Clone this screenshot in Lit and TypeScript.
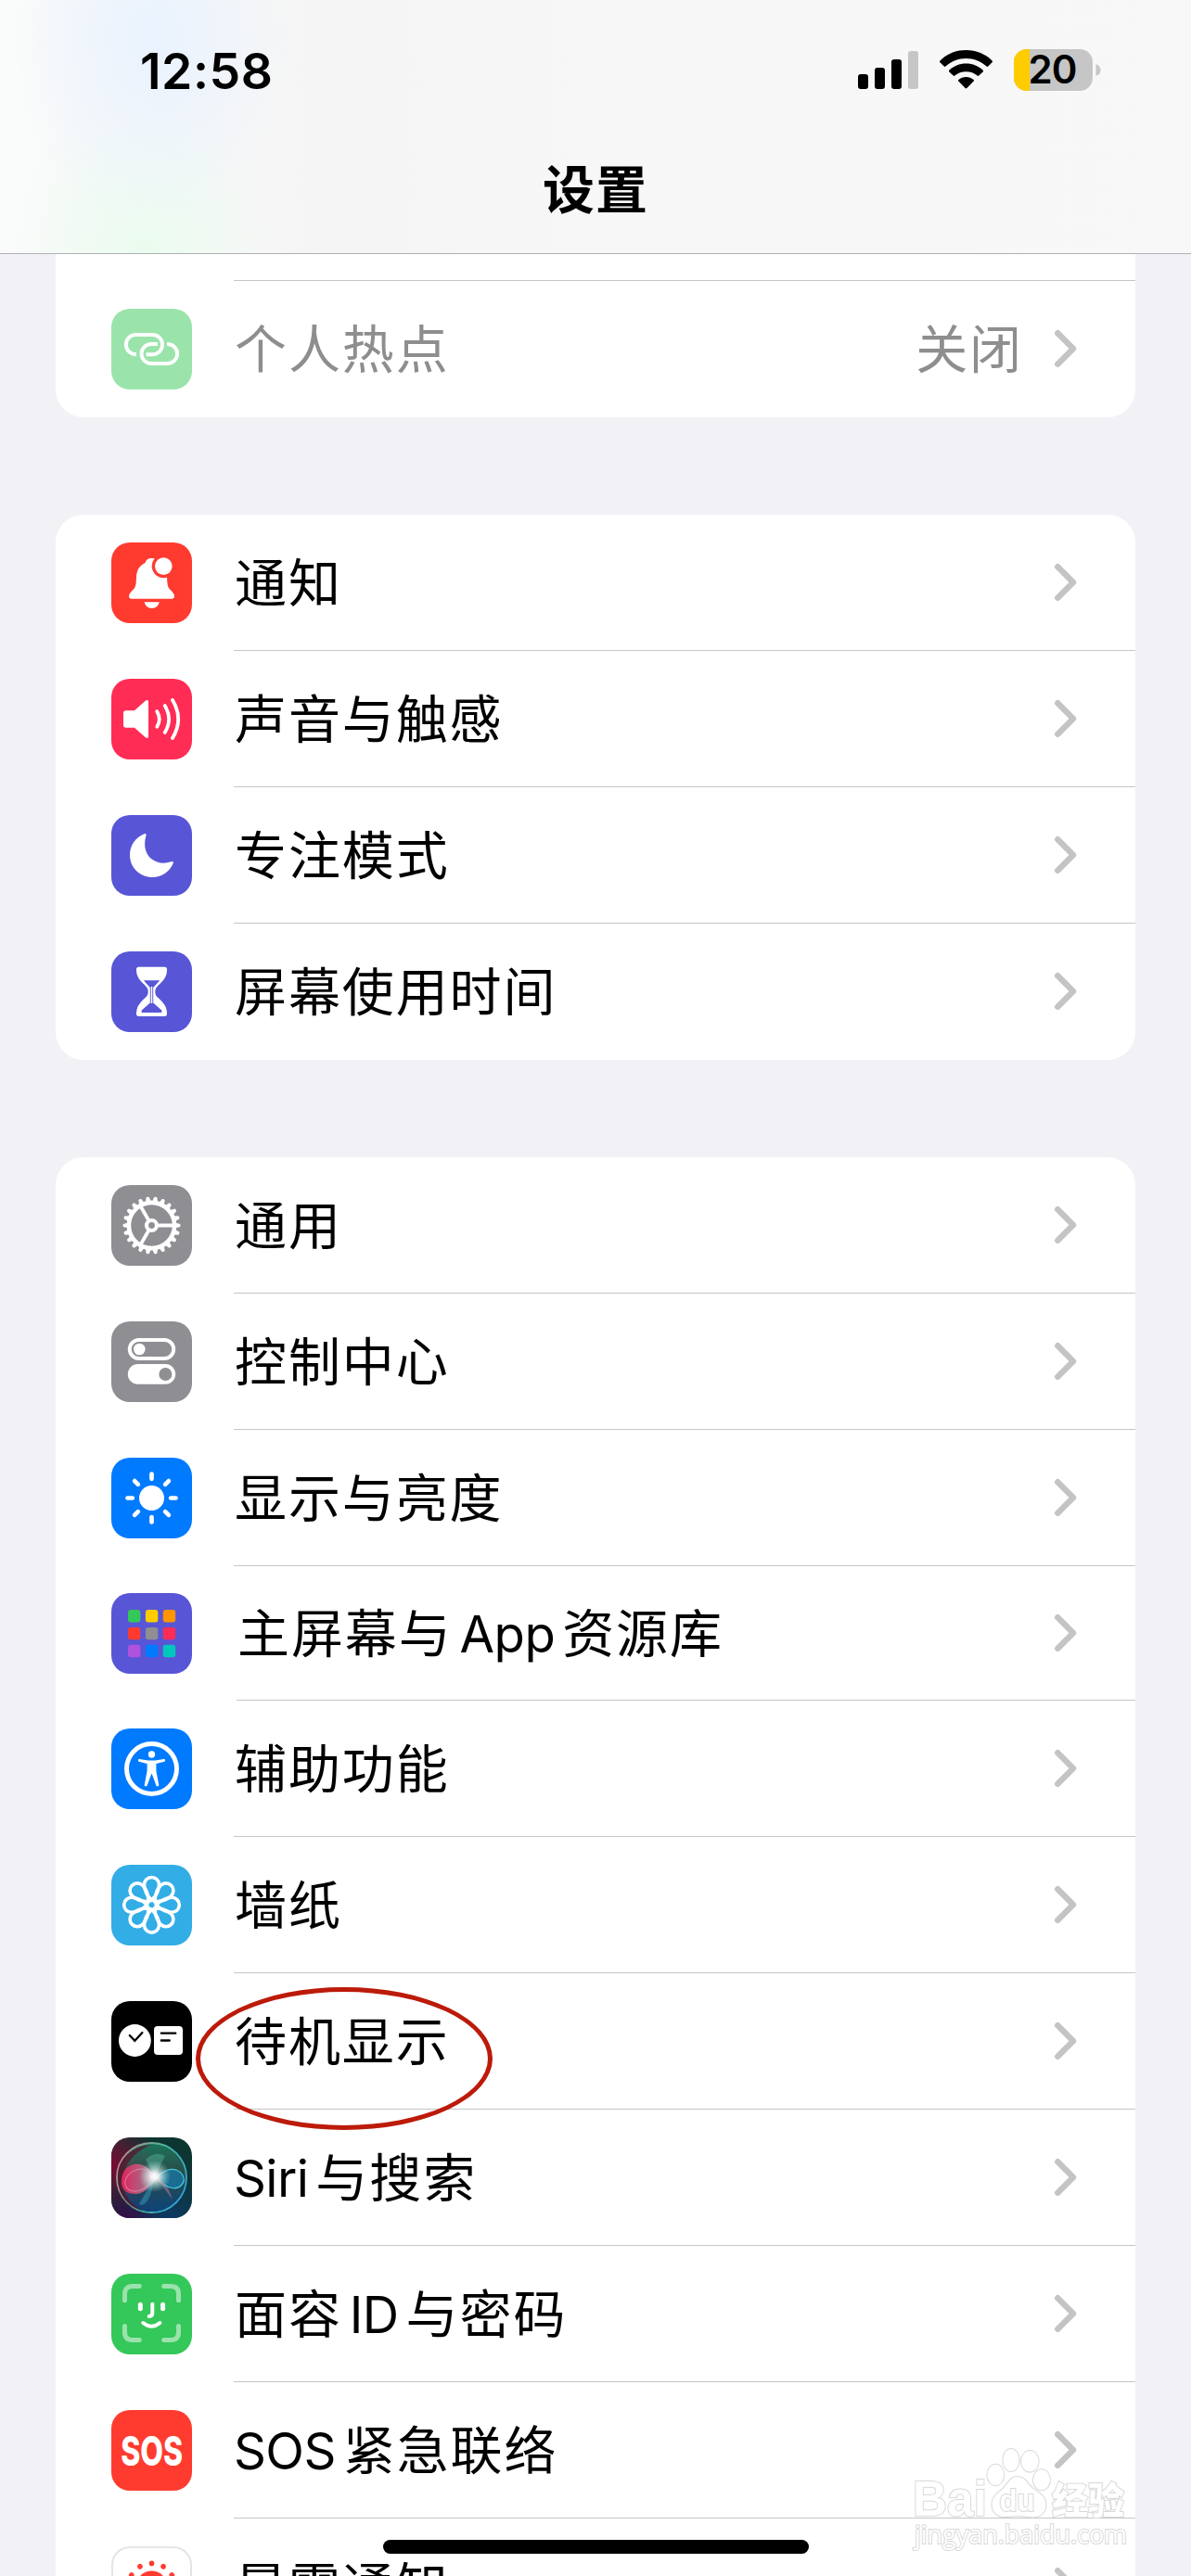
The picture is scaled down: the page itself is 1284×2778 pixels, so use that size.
import { LitElement, html, css, svg } from 'lit';
import { customElement, property } from 'lit/decorators.js';
import { classMap } from 'lit/directives/class-map.js';

interface SettingsItem {
  icon: string;
  label: string;
  value?: string;
  disabled?: boolean;
  compact?: boolean;
}

const connectivity: SettingsItem[] = [
  { icon: 'hotspot', label: '个人热点', value: '关闭', disabled: true },
];

const alerts: SettingsItem[] = [
  { icon: 'bell', label: '通知' },
  { icon: 'sound', label: '声音与触感' },
  { icon: 'moon', label: '专注模式' },
  { icon: 'hourglass', label: '屏幕使用时间' },
];

const system: SettingsItem[] = [
  { icon: 'gear', label: '通用' },
  { icon: 'toggles', label: '控制中心' },
  { icon: 'sun', label: '显示与亮度' },
  { icon: 'grid', label: '主屏幕与App资源库', compact: true },
  { icon: 'person', label: '辅助功能' },
  { icon: 'flower', label: '墙纸' },
  { icon: 'standby', label: '待机显示' },
  { icon: 'siri', label: 'Siri与搜索' },
  { icon: 'faceid', label: '面容ID与密码' },
  { icon: 'sos', label: 'SOS紧急联络' },
  { icon: 'exposure', label: '暴露通知' },
];

const range = (n: number) => Array.from({ length: n }, (_, i) => i);

const gridColors = [
  '#34c759', '#ffcc00', '#ff9500',
  '#ff3b30', '#8e8e93', '#ff2d55',
  '#af52de', '#007aff', '#00c7be',
];

const glyphs: Record<string, unknown> = {
  hotspot: svg`
    <g fill="none" stroke="#fff" stroke-width="3.9">
      <path d="M27 49.3C20.5 49.3 15.8 44.6 15.8 38.6S20.5 28 26.5 28H44.5a10.6 10.6 0 0 1 0 21.2H37.5" />
      <path d="M50 38H43a10.5 10.5 0 0 0 0 21H60.6a10.5 10.5 0 0 0 0-21H60" />
    </g>`,
  bell: svg`
    <path fill="#fff" d="M43.5 17c-4 0-6 1.8-7 5C30 25 27.5 30 27 37C26.8 44 26.5 48 24 50.5C21 53.5 19 55.5 19 58c0 1.8 1 2.8 3 2.8H65c2 0 3-1 3-2.8c0-2.5-2-4.5-5-7.5C60.6 48 60.3 44 60 37C59.5 30 57 25 50.5 22C49.5 18.8 47.5 17 43.5 17z" />
    <path fill="#fff" d="M35.7 64.3H51.7C51 68.5 47.5 71 43.7 71S36.4 68.5 35.7 64.3z" />
    <circle cx="56.3" cy="25.6" r="12.6" fill="#ff3b30" />
    <circle cx="56.3" cy="25.6" r="9.3" fill="#fff" />`,
  sound: svg`
    <path fill="#fff" d="M13 37q0-2.8 2.8-2.8H25L36.5 24Q40 21.5 40 25V62Q40 65.5 36.5 63L25 52.7H15.8Q13 52.7 13 50z" />
    <g fill="none" stroke="#fff" stroke-width="3.8" stroke-linecap="round">
      <path d="M49.3 35.2Q54.2 43.5 49.3 51.8" />
      <path d="M57.7 29Q66.5 43.5 57.7 58" />
      <path d="M66 23Q78.4 43.5 66 64" />
    </g>`,
  moon: svg`
    <path fill="#fff" d="M35.5 20.3Q38 19.3 37.5 22C34.3 33 37 42 43 47C49 52 57 52.8 64.5 50.3Q67.5 49.5 66.7 52C63 61 54 67 44.5 67C31 67 20 57 20 43C20 33 26 24 35.5 20.3z" />`,
  hourglass: svg`
    <path fill="#fff" d="M29.5 16.8H57.5Q60 16.8 60 19.5C60 27 57 30.5 51 36.3C48.5 39 47.3 40 47.3 43.4S48.5 48 51 50.5C57 56.3 60 60 60 67.3Q60 70 57.5 70H29.5Q27 70 27 67.3C27 60 30 56.3 36 50.5C38.5 48 39.7 46.8 39.7 43.4S38.5 39 36 36.3C30 30.5 27 27 27 19.5Q27 16.8 29.5 16.8z" />
    <path fill="#5856d6" d="M34.8 31.2H52.4L45.2 39V55.4L54.3 63.6V66H32.7V63.6L41.8 55.4V39z" />
    <path stroke="#fff" stroke-width="1.5" d="M43.5 38V56" />`,
  gear: svg`
    <g transform="translate(43.5 43.5)" fill="none" stroke="#fff">
      <circle r="24.6" stroke-width="4.6" />
      <circle r="5.5" stroke-width="4.2" />
      ${[0, 120, 240].map(a => svg`<path stroke-width="3.8" d="M7 0H24" transform="rotate(${a})" />`)}
      ${range(22).map(i => svg`<path fill="#fff" stroke="none" transform="rotate(${(i * 360) / 22})" d="M26-2.8L30.6-1.6Q31.6 0 30.6 1.6L26 2.8z" />`)}
    </g>`,
  toggles: svg`
    <rect x="19.8" y="20" width="47.4" height="20" rx="10" fill="none" stroke="#fff" stroke-width="4" />
    <circle cx="30.3" cy="30" r="6.3" fill="#fff" />
    <rect x="17.8" y="46" width="51.4" height="21.8" rx="10.9" fill="#fff" />
    <circle cx="58.4" cy="57" r="7" fill="#8e8e93" />`,
  sun: svg`
    <g transform="translate(43.5 43.5)">
      <circle r="13.5" fill="#fff" />
      ${range(8).map(i => svg`<path stroke="#fff" stroke-width="4.7" stroke-linecap="round" d="M20.7 0H26" transform="rotate(${i * 45})" />`)}
    </g>`,
  grid: svg`
    ${gridColors.map((c, i) => svg`
      <rect x=${18 + (i % 3) * 18.9} y=${18 + Math.floor(i / 3) * 18.9} width="13.4" height="13.4" rx="3" fill=${c} />
    `)}`,
  person: svg`
    <circle cx="43.5" cy="43.5" r="27" fill="none" stroke="#fff" stroke-width="5" />
    <circle cx="43.5" cy="28" r="3.7" fill="#fff" />
    <path fill="#fff" stroke="#fff" stroke-width="2" stroke-linejoin="round" d="M30 34L39.5 35.6H47.5L57 34V34.8L47.4 37.2V46L50.3 61.2H49.3L44.4 48H42.6L37.7 61.2H36.7L39.6 46V37.2L30 34.8z" />`,
  flower: svg`
    <g transform="translate(43.5 43.3)" fill="none" stroke="#fff" stroke-width="3.6">
      ${range(8).map(i => svg`<path transform="rotate(${i * 45})" d="M0-5C-4-9-8-15-8-21.8A8 8 0 0 1 8-21.8C8-15 4-9 0-5z" />`)}
      <circle r="5.2" />
    </g>`,
  standby: svg`
    <circle cx="25.4" cy="42.5" r="17.4" fill="#fff" />
    <rect x="46" y="27" width="31" height="31" rx="4" fill="#fff" />
    <g fill="none" stroke="#000" stroke-width="2.3" stroke-linecap="round">
      <path d="M19.8 37L25.3 42.8L33.4 34" />
      <path d="M53.8 34.7H69.3M53.8 42.5H62.8" />
    </g>`,
  siri: svg`
    <defs>
      <radialGradient id="s-pink" gradientUnits="userSpaceOnUse" cx="0" cy="30" r="50">
        <stop offset="0" stop-color="#7d0a33" />
        <stop offset="1" stop-color="#7d0a33" stop-opacity="0" />
      </radialGradient>
      <radialGradient id="s-navy" gradientUnits="userSpaceOnUse" cx="60" cy="95" r="60">
        <stop offset="0" stop-color="#0b3a6b" />
        <stop offset="1" stop-color="#0b3a6b" stop-opacity="0" />
      </radialGradient>
      <radialGradient id="s-violet" gradientUnits="userSpaceOnUse" cx="14" cy="90" r="42">
        <stop offset="0" stop-color="#3a0a4a" />
        <stop offset="1" stop-color="#3a0a4a" stop-opacity="0" />
      </radialGradient>
      <linearGradient id="s-ball" x1="0" y1="0" x2="0" y2="1">
        <stop offset="0" stop-color="#1f8a68" />
        <stop offset=".45" stop-color="#35504f" />
        <stop offset="1" stop-color="#0b4a86" />
      </linearGradient>
      <linearGradient id="s-rim" x1="0" y1=".3" x2="1" y2=".7">
        <stop offset="0" stop-color="#c58a94" />
        <stop offset=".5" stop-color="#49b596" />
        <stop offset="1" stop-color="#2fa4e0" />
      </linearGradient>
      <linearGradient id="s-left" x1="0" y1="0" x2="1" y2="0">
        <stop offset="0" stop-color="#e0245c" />
        <stop offset=".5" stop-color="#c45a80" stop-opacity=".9" />
        <stop offset="1" stop-color="#c9b5bc" stop-opacity=".7" />
      </linearGradient>
      <radialGradient id="s-glow">
        <stop offset="0" stop-color="#fff" />
        <stop offset=".25" stop-color="#fff" stop-opacity=".85" />
        <stop offset="1" stop-color="#9fe8e0" stop-opacity="0" />
      </radialGradient>
    </defs>
    <rect width="87" height="87" fill="#0d3531" />
    <rect width="87" height="87" fill="url(#s-navy)" />
    <rect width="87" height="87" fill="url(#s-pink)" />
    <rect width="87" height="87" fill="url(#s-violet)" />
    <circle cx="43.5" cy="43.5" r="37.5" fill="url(#s-ball)" fill-opacity=".75" stroke="url(#s-rim)" stroke-width="1.8" />
    <path d="M7 43C6 22 25 9 43 8C28 14 14 26 12 46C12 62 22 73 34 79C18 76 7 62 7 43z" fill="#5a0a26" opacity=".65" />
    <path d="M11 50C10 33 22 27 31 29C39 31 45 38 50 43C44 50 38 60 27 61C18 61 12 58 11 50z" fill="url(#s-left)" />
    <path d="M49 42C57 36 63 33 70 35C77 38 81 45 76 51C71 57 62 55 57 51z" fill="#1580b4" opacity=".65" />
    <path d="M49 42C57 36 63 33 70 35C77 38 81 45 76 51C71 57 62 55 57 51" fill="none" stroke="#45cbe0" stroke-width="1.2" />
    <ellipse cx="29" cy="46" rx="15" ry="11" transform="rotate(-28 29 46)" fill="none" stroke="#e8a3bd" stroke-width=".9" opacity=".7" />
    <path d="M47 42L30 72Q41 77 47 42" fill="#46c5e0" opacity=".35" />
    <path d="M48 43L66 67Q60 48 48 43" fill="#d58aa8" opacity=".45" />
    <path d="M37 24L47 42L58 20Q47 14 37 24" fill="#6fe0bc" opacity=".3" />
    <circle cx="47" cy="42" r="17" fill="url(#s-glow)" />`,
  faceid: svg`
    <g fill="none" stroke-linecap="round">
      <path stroke="#9ae3ac" stroke-width="5" d="M14.5 28.7V22Q14.5 13.6 23 13.6H30.3M56.7 13.6H64Q72.5 13.6 72.5 22V28.7M72.5 56.5V63Q72.5 71.5 64 71.5H56.7M30.3 71.5H23Q14.5 71.5 14.5 63V56.5" />
      <path stroke="#fff" stroke-width="5" d="M31.3 33.3V37.7M55.6 33.3V37.7" />
      <path stroke="#fff" stroke-width="4" d="M44.3 32.8V42.5Q44.3 45.8 40.6 46M34.3 53Q43.4 60.5 52.4 53" />
    </g>`,
  sos: svg`
    <text x="10.2" y="59.5" textLength="67" lengthAdjust="spacingAndGlyphs" class="sos-text">SOS</text>`,
  exposure: svg`
    <circle cx="43.5" cy="43.5" r="17" fill="#ff3b30" />
    ${range(12).map(i => svg`<circle cx="43.5" cy="18.4" r="2.8" fill="#ff3b30" transform="rotate(${i * 30} 43.5 43.5)" />`)}`,
};

@customElement('settings-icon')
export class SettingsIcon extends LitElement {
  @property() name = '';

  static styles = css`
    :host {
      display: block;
      flex: none;
    }

    .tile {
      display: block;
      box-sizing: border-box;
      width: 87px;
      height: 87px;
      border-radius: 20px;
      overflow: hidden;
    }

    .hotspot { background: #9ae4ab; }
    .bell, .sos { background: #ff3b30; }
    .sound { background: #ff2d55; }
    .moon, .hourglass, .grid { background: #5856d6; }
    .gear, .toggles { background: #8e8e93; }
    .sun, .person { background: #007aff; }
    .flower { background: #32ade6; }
    .standby { background: #000; }
    .faceid { background: #34c759; }
    .exposure {
      background: #fff;
      box-shadow: inset 0 0 0 2px #e5e5e5;
    }

    .sos-text {
      font: 800 44px Inter, 'Liberation Sans', sans-serif;
      fill: #fff;
    }
  `;

  render() {
    return html`
      <svg class="tile ${this.name}" viewBox="0 0 87 87">${glyphs[this.name]}</svg>
    `;
  }
}

@customElement('settings-row')
export class SettingsRow extends LitElement {
  @property({ attribute: false }) item!: SettingsItem;
  @property({ type: Boolean }) last = false;

  static styles = css`
    :host {
      display: block;
    }

    .row {
      display: flex;
      align-items: center;
      gap: 45px;
      height: 147px;
      padding-left: 60px;
    }

    .row.compact {
      height: 145px;
      gap: 48px;
    }

    .body {
      display: flex;
      align-items: center;
      align-self: stretch;
      flex: 1;
      box-sizing: border-box;
      padding: 0 62px 0 1px;
      border-bottom: 1px solid #c6c6c8;
    }

    .row.last .body {
      border-bottom-color: transparent;
    }

    .label {
      display: flex;
      align-items: baseline;
      flex: 1;
      padding-bottom: 7px;
      font-size: 56px;
      line-height: 80px;
      letter-spacing: 1.9px;
      white-space: nowrap;
    }

    .latin {
      font-family: Inter, 'Liberation Sans', sans-serif;
      font-size: 54.5px;
      line-height: 60px;
      letter-spacing: -0.6px;
      margin: 0 8px;
    }

    .latin:first-child {
      margin-left: -1px;
    }

    .value {
      font-size: 56px;
      line-height: 80px;
      letter-spacing: 1.9px;
      padding-bottom: 7px;
      margin-right: 32px;
    }

    .disabled .label,
    .disabled .value {
      color: #8e8e8f;
    }

    .chevron {
      flex: none;
      width: 27px;
      height: 42px;
    }
  `;

  renderLabel() {
    return this.item.label
      .split(/([A-Za-z]+)/)
      .filter(part => part)
      .map(part => html`<span class=${/[A-Za-z]/.test(part) ? 'latin' : 'han'}>${part}</span>`);
  }

  render() {
    const { icon, value, disabled, compact } = this.item;
    return html`
      <div class=${classMap({ row: true, last: this.last, disabled: !!disabled, compact: !!compact })}>
        <settings-icon .name=${icon}></settings-icon>
        <div class="body">
          <div class="label">${this.renderLabel()}</div>
          ${value ? html`<div class="value">${value}</div>` : ''}
          <svg class="chevron" viewBox="0 0 27 42">
            <path d="M5.3 4.2L22 21L5.3 37.8" fill="none" stroke="#c4c4c6" stroke-width="6.5" stroke-linecap="round" stroke-linejoin="round" />
          </svg>
        </div>
      </div>
    `;
  }
}

@customElement('status-bar')
export class StatusBar extends LitElement {
  static styles = css`
    :host {
      display: flex;
      align-items: center;
      justify-content: space-between;
      box-sizing: border-box;
      height: 152px;
      padding: 0 97px 0 151px;
      font-family: Inter, 'Liberation Sans', sans-serif;
    }

    .time {
      font-size: 53.5px;
      font-weight: 600;
      letter-spacing: 0.5px;
      line-height: 60px;
      padding-top: 2px;
    }

    .icons {
      display: flex;
      align-items: center;
      gap: 23px;
    }

    .icons svg {
      display: block;
      height: 46px;
    }

    .percent {
      font: 600 42px Inter, 'Liberation Sans', sans-serif;
    }
  `;

  render() {
    return html`
      <span class="time">12:58</span>
      <div class="icons">
        <svg width="65" viewBox="0 0 65 46">
          <rect y="27" width="11" height="16" rx="3" />
          <rect x="18" y="20" width="11" height="23" rx="3" />
          <rect x="36" y="11" width="11" height="32" rx="3" />
          <rect x="54" y="2" width="11" height="41" rx="3" fill="#c6c6c6" />
        </svg>
        <svg width="57" viewBox="0 0 57 46">
          <path d="M28.5 1C39.5 1 49.5 5.2 56.6 12.4Q57.4 13.3 56.6 14.2L52.3 18.6Q51.5 19.4 50.6 18.6C44.6 13 37 9.9 28.5 9.9S12.4 13 6.4 18.6Q5.5 19.4 4.7 18.6L.4 14.2Q-.4 13.3 .4 12.4C7.5 5.2 17.5 1 28.5 1z" />
          <path d="M28.5 15.5C35.5 15.5 42 18.2 46.7 22.7Q47.5 23.5 46.7 24.4L42.3 28.6Q41.5 29.4 40.6 28.6C37.3 25.8 33.1 24.3 28.5 24.3S19.7 25.8 16.4 28.6Q15.5 29.4 14.7 28.6L10.3 24.4Q9.5 23.5 10.3 22.7C15 18.2 21.5 15.5 28.5 15.5z" />
          <path d="M28.5 30C31.5 30 34.3 31.1 36.6 32.9Q37.5 33.7 36.7 34.6L29.4 42Q28.5 42.9 27.6 42L20.3 34.6Q19.5 33.7 20.4 32.9C22.7 31.1 25.5 30 28.5 30z" />
        </svg>
        <svg width="94" viewBox="0 0 94 46">
          <clipPath id="cell"><rect width="85" height="45" rx="14" /></clipPath>
          <rect width="85" height="45" fill="#c6c6c6" clip-path="url(#cell)" />
          <rect width="17" height="45" fill="#ffcc00" clip-path="url(#cell)" />
          <path d="M88.5 16Q93.5 18 93.5 22.5T88.5 29z" fill="#c6c6c6" />
          <text x="15.5" y="37.4" textLength="53" class="percent">20</text>
        </svg>
      </div>
    `;
  }
}

@customElement('app-root')
export class AppRoot extends LitElement {
  static styles = css`
    :host {
      display: block;
      position: relative;
      width: 1284px;
      height: 2778px;
      overflow: hidden;
      background: #f2f1f6;
      color: #000;
      font-family: 'Noto Sans CJK SC', 'Noto Sans', sans-serif;
    }

    .header {
      box-sizing: border-box;
      height: 274px;
      border-bottom: 1px solid #b0b0b3;
      background:
        radial-gradient(ellipse 150px 210px at 165px 40px, #e9f2fe, #e9f2fe00),
        radial-gradient(ellipse 140px 160px at 155px 265px, #ebfcef, #ebfcef00),
        linear-gradient(90deg, #fafbfb, #f5f5f5 28%, #f7f7f7 50%, #f8f8f8);
    }

    .title {
      margin: 0;
      font-size: 56px;
      font-weight: 700;
      line-height: 80px;
      letter-spacing: 1px;
      text-align: center;
      padding-top: 9px;
    }

    .content {
      display: flex;
      flex-direction: column;
      gap: 105px;
      padding: 0 60px;
    }

    .card {
      background: #fff;
      border-radius: 30px;
    }

    .card.scrolled {
      border-top-left-radius: 0;
      border-top-right-radius: 0;
    }

    .sliver {
      height: 28px;
      margin-left: 192px;
      border-bottom: 1px solid #c6c6c8;
    }

    .marker {
      position: absolute;
      box-sizing: border-box;
      left: 211px;
      top: 2143px;
      width: 320px;
      height: 154px;
      border: 5px solid #bc1a0a;
      border-radius: 50%;
    }

    .home-indicator {
      position: absolute;
      left: 413px;
      top: 2739px;
      width: 459px;
      height: 15px;
      border-radius: 8px;
      background: #000;
    }

    .watermark {
      position: absolute;
      left: 980px;
      top: 2636px;
      width: 240px;
      height: 120px;
      fill: #fff;
      stroke: #d8d8d8;
      stroke-width: 2px;
      paint-order: stroke;
    }

    .brand {
      font: 700 54px 'Liberation Sans', sans-serif;
    }

    .brand-small {
      font: 700 33px 'Liberation Sans', sans-serif;
    }

    .brand-han {
      font: 900 40px 'Noto Sans CJK SC', sans-serif;
    }

    .site {
      font: 400 27.5px 'Open Sans', sans-serif;
    }
  `;

  renderRows(items: SettingsItem[]) {
    return items.map((item, i) => html`
      <settings-row .item=${item} ?last=${i === items.length - 1}></settings-row>
    `);
  }

  render() {
    return html`
      <header class="header">
        <status-bar></status-bar>
        <h1 class="title">设置</h1>
      </header>
      <main class="content">
        <section class="card scrolled">
          <div class="sliver"></div>
          ${this.renderRows(connectivity)}
        </section>
        <section class="card">${this.renderRows(alerts)}</section>
        <section class="card">${this.renderRows(system)}</section>
      </main>
      <div class="marker"></div>
      <div class="home-indicator"></div>
      <svg class="watermark" viewBox="0 0 240 120">
        <text class="brand" x="4" y="77" textLength="80" lengthAdjust="spacingAndGlyphs">Bai</text>
        <ellipse cx="93.3" cy="33" rx="9" ry="11.3" />
        <ellipse cx="110" cy="17" rx="8.7" ry="12" />
        <ellipse cx="130.3" cy="18.3" rx="9.3" ry="11.3" />
        <ellipse cx="143" cy="38.3" rx="9" ry="11" />
        <path d="M117 35C126 35 128 44 134 48C141 53 147.5 56 147.5 65C147.5 74 141 78.5 134 78.5C128 78.5 124 77 118 77C112 77 109 78 103 78C95 78 89.5 73 89.5 64.5C89.5 56 96 53 102 47C107 42 109 35 117 35z" />
        <text class="brand-small" x="97.5" y="71.5" textLength="38" lengthAdjust="spacingAndGlyphs">du</text>
        <text class="brand-han" x="154" y="75" textLength="78" lengthAdjust="spacingAndGlyphs">经验</text>
        <text class="site" x="6" y="107" textLength="229" lengthAdjust="spacingAndGlyphs">jingyan.baidu.com</text>
      </svg>
    `;
  }
}
